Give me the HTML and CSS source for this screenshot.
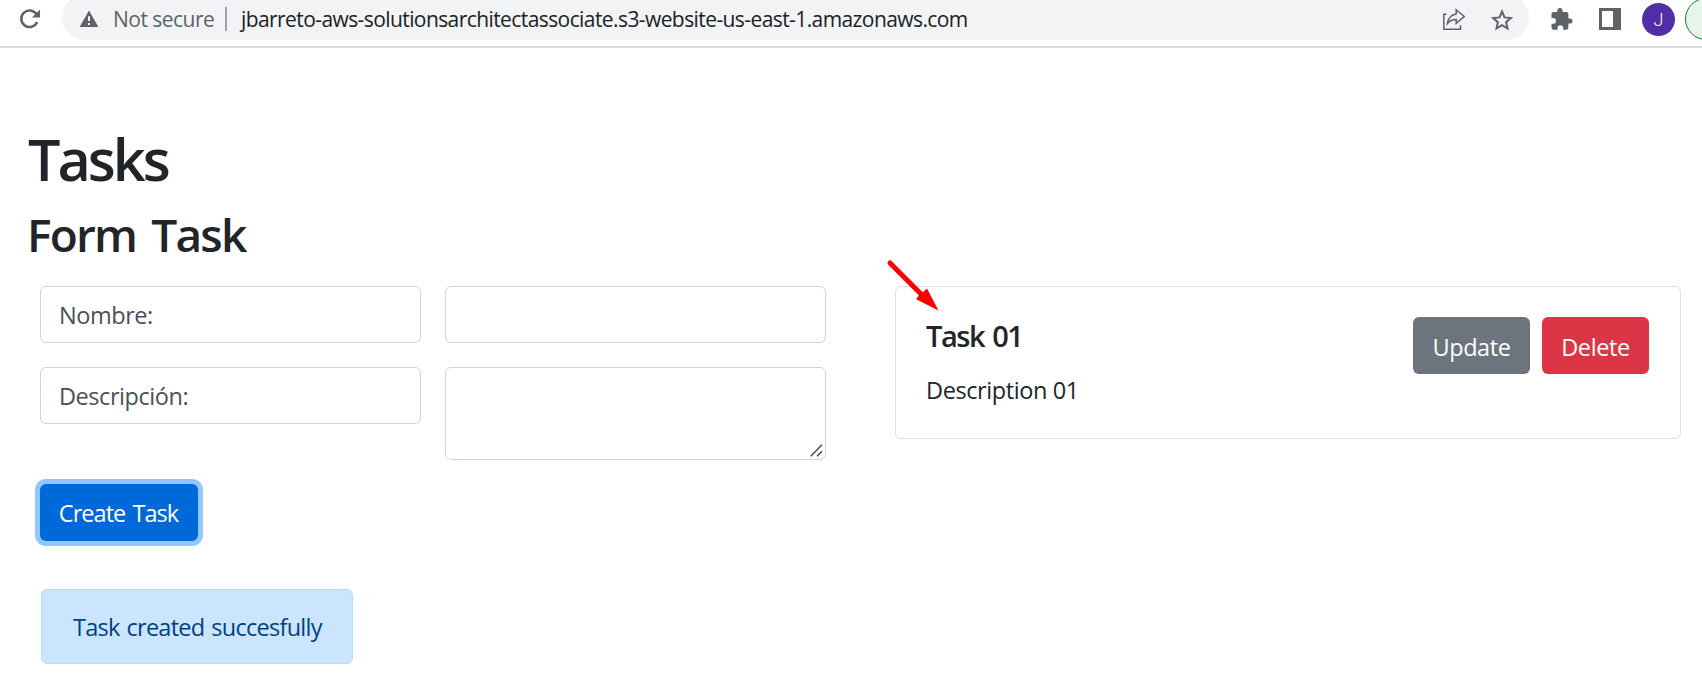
FILE: index.html
```
<!DOCTYPE html>
<html lang="es">
<head>
<meta charset="utf-8">
<title>Tasks</title>
<link rel="stylesheet" href="styles.css">
</head>
<body>
<header class="toolbar">
  <svg class="reload" width="24" height="24" viewBox="0 0 24 24"><path d="M19.2 15.1A8.3 8.3 0 1 1 18.4 7" fill="none" stroke="#5f6368" stroke-width="2.5"/><path d="M22 2.400v8.100h-8.100z" fill="#5f6368"/></svg>
  <div class="address">
    <svg class="warn" width="20" height="18" viewBox="0 0 20 18"><path d="M10 0.6L19.4 17H0.6z" fill="#5f6368"/><path d="M10 6.2v4.9M10 12.9v2.2" stroke="#f1f3f4" stroke-width="2"/></svg>
    <span class="security">Not secure</span>
    <span class="divider"></span>
    <span class="url">jbarreto-aws-solutionsarchitectassociate.s3-website-us-east-1.amazonaws.com</span>
    <svg class="share" width="24" height="23" viewBox="0 0 24 23" fill="none" stroke="#5f6368" stroke-width="1.5"><path d="M4.500 6.200H1.800v15H18.500v-4"/><path d="M14.200 1.800l8 6.700-8 6.800v-3.900c-3.700 0-6.500 1.200-8.800 4.200.7-5.100 3.600-8.900 8.800-9.700z"/></svg>
    <svg class="star" width="22" height="22" viewBox="0 0 22 22"><path d="M11 2.500l2.500 5.900 6.400.6-4.800 4.200 1.400 6.300-5.500-3.300-5.500 3.300 1.400-6.300L2.100 9l6.400-.6z" fill="none" stroke="#5f6368" stroke-width="2"/></svg>
  </div>
  <svg class="puzzle" width="22" height="22" viewBox="0 0 22 22"><path d="M19 10.5h-1.6V6.2c0-1.2-1-2.1-2.1-2.1H11.500V2.600a2.600 2.600 0 0 0-5.200 0v1.500H2.600C1.400 4.100.5 5 .5 6.200v3.900h1.600a2.800 2.800 0 0 1 0 5.600H.5v3.900c0 1.200.9 2.100 2.100 2.100h4v-1.600a2.800 2.800 0 0 1 5.600 0v1.600h3.100c1.200 0 2.100-.9 2.100-2.100v-4H19a2.550 2.550 0 0 0 0-5.100z" fill="#5f6368"/></svg>
  <svg class="panel" width="22" height="22" viewBox="0 0 22 22"><path d="M0 0h22v22H0zM3 3v16h11V3z" fill="#5f6368" fill-rule="evenodd"/></svg>
  <span class="avatar">J</span>
  <span class="update-chip"></span>
</header>
<main class="page">
  <h1 class="title">Tasks</h1>
  <h2 class="subtitle">Form Task</h2>
  <div class="columns">
    <form class="form">
      <div class="fields">
        <label class="field">Nombre:</label>
        <input class="field" type="text">
        <label class="field">Descripción:</label>
        <div class="field area">
          <svg class="grip" width="13" height="13" viewBox="0 0 13 13"><path d="M.7 12.300L12 .8M7 12.300L12 7.300" stroke="#4c4c4c" stroke-width="1.500"/></svg>
        </div>
      </div>
      <button class="btn create" type="button">Create Task</button>
      <div class="alert">Task created succesfully</div>
    </form>
    <section class="card">
      <div class="card-text">
        <h5 class="card-title">Task 01</h5>
        <p class="card-desc">Description 01</p>
      </div>
      <button class="btn update" type="button">Update</button>
      <button class="btn delete" type="button">Delete</button>
      <svg class="arrow" width="54" height="54" viewBox="0 0 54 54"><path d="M4 4L36 36" stroke="#f00" stroke-width="5" stroke-linecap="round"/><path d="M52.500 51.500L41 29.500 36.500 33.500 34 34.500 30.200 40.200z" fill="#f00"/></svg>
    </section>
  </div>
</main>
</body>
</html>
```
FILE: styles.css
```
* { box-sizing: border-box; }
body {
  margin: 0;
  background: #fff;
  color: #212529;
  font-family: "Open Sans", sans-serif;
  font-size: 23.5px;
  line-height: 36px;
  height: 700px;
  overflow: hidden;
}
svg { display: block; flex: none; }
.toolbar {
  display: flex;
  height: 48px;
  border-bottom: 2px solid #d9dadb;
  overflow: hidden;
}
.reload { margin: 7px 0 0 18px; }
.address {
  display: flex;
  flex: none;
  width: 1467px;
  height: 45px;
  margin: -5px 0 0 20px;
  padding-top: 5px;
  background: #f1f3f4;
  border-radius: 22.5px;
  font-size: 21px;
  line-height: 38px;
  white-space: nowrap;
}
.warn { margin: 10px 0 0 17px; }
.security { width: 101px; margin-left: 14px; color: #5f6368; letter-spacing: -0.52px; }
.divider { flex: none; width: 2px; height: 24px; margin: 7px 0 0 11px; background: #9fa3a7; }
.url { flex: 1; margin-left: 14px; letter-spacing: -0.585px; color: #202124; }
.share { margin-top: 8px; }
.star { margin: 9px 16px 0 25px; }
.puzzle { margin: 8px 0 0 22px; }
.panel { margin: 8px 0 0 26px; }
.avatar {
  flex: none;
  width: 33px;
  height: 33px;
  margin: 3px 0 0 21px;
  border-radius: 50%;
  background: #512da8;
  color: #fff;
  font: 300 18px/34px Roboto, sans-serif;
  text-align: center;
}
.update-chip {
  flex: none;
  width: 100px;
  height: 42px;
  margin: -2px 0 0 10px;
  border: 1.5px solid #188038;
  border-radius: 21px;
  background: #e6f4ea;
}
.page { padding: 75px 21px 0 28px; }
.title, .subtitle, .card-title, .card-desc { margin: 0; }
.title { font-size: 57.5px; line-height: 73px; font-weight: 600; letter-spacing: -3px; }
.subtitle {
  margin: 9px 0 0 -1px;
  font-size: 46px;
  line-height: 58px;
  font-weight: 600;
  letter-spacing: -1.8px;
  word-spacing: 5px;
}
.columns { display: flex; align-items: flex-start; gap: 69px; margin-top: 23px; }
.form { width: 798px; padding-left: 12px; }
.fields { display: grid; grid-template-columns: 381px 381px; gap: 24px; align-items: start; }
.field {
  display: block;
  width: 381px;
  height: 57px;
  padding: 10px 18px;
  border: 1px solid #ced4da;
  border-radius: 6px;
  background: #fff;
  color: #495057;
  letter-spacing: -0.45px;
}
.area { display: flex; align-items: flex-end; justify-content: flex-end; height: 93px; padding: 0 2px 2px; }
.btn {
  display: block;
  flex: none;
  height: 57px;
  border: 0;
  border-radius: 6px;
  padding: 0;
  color: #fff;
  font: 23.5px/36px "Open Sans", sans-serif;
}
.create {
  width: 158px;
  margin-top: 24px;
  padding-right: 1px;
  background: #0069d9;
  box-shadow: 0 0 0 5px #91c6ff;
  letter-spacing: -0.95px;
  word-spacing: 2px;
}
.alert {
  width: 312px;
  height: 75px;
  margin: 48px 0 0 1px;
  padding: 19px 31px;
  border: 1px solid #b8daff;
  border-radius: 6px;
  background: #cce5ff;
  color: #004085;
  letter-spacing: -0.73px;
  word-spacing: 1.5px;
  white-space: nowrap;
}
.card {
  position: relative;
  display: flex;
  flex: 1;
  height: 153px;
  padding: 31px 31px 31px 30px;
  border: 1px solid #dfdfdf;
  border-radius: 6px;
}
.card-text { flex: 1; }
.card-title { font-size: 29px; line-height: 36px; font-weight: 600; letter-spacing: -1.45px; word-spacing: 2px; }
.card-desc { margin-top: 18px; letter-spacing: -0.4px; }
.update, .delete { margin-top: -1px; padding-top: 2px; letter-spacing: -0.4px; }
.update { width: 117px; background: #6c757d; }
.delete { width: 107px; margin-left: 12px; background: #dc3545; }
.arrow { position: absolute; left: -10px; top: -28px; }
```
